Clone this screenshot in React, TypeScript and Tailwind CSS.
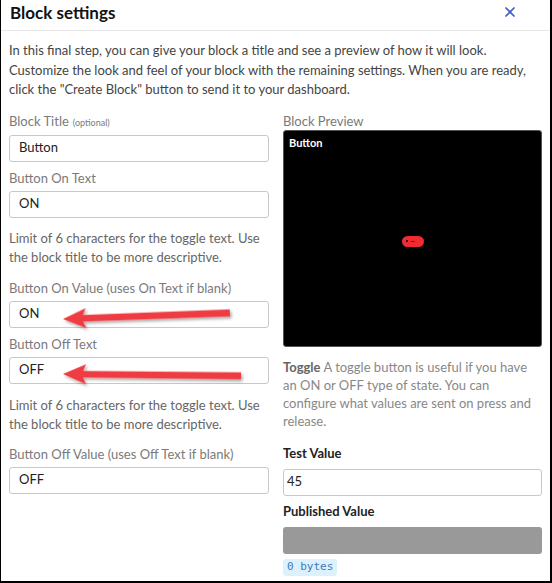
import { X } from 'lucide-react';

const font = { fontFamily: 'Lato, "Open Sans", sans-serif' };

function Field({ label, hint, value }: { label: string; hint?: string; value: string }) {
  return (
    <div>
      <div className="text-[13px] leading-[17px] text-[#7a7a7a]">
        {label}
        {hint && <span className="text-[9px] ml-1">{hint}</span>}
      </div>
      <div className="mt-[4px] h-[27px] rounded-[3px] border border-[#c8c8c8] px-[9px] flex items-center text-[13px] text-[#222]">
        {value}
      </div>
    </div>
  );
}

function Help() {
  return (
    <p className="text-[13px] leading-[19px] text-[#666]">
      Limit of 6 characters for the toggle text. Use the block title to be more descriptive.
    </p>
  );
}

function Arrow({ x, y, len, angle }: { x: number; y: number; len: number; angle: number }) {
  return (
    <g transform={`translate(${x} ${y}) rotate(${angle})`} filter="url(#shadow)">
      <polygon
        points={`0,0 23,-10 20,-3.2 ${len},-3.6 ${len},3.6 20,3.2 23,10`}
        fill="#ef3b43"
      />
    </g>
  );
}

export default function App() {
  return (
    <div
      className="relative w-[552px] h-[583px] bg-white border-l border-r-2 border-b-2 border-black overflow-hidden"
      style={font}
    >
      {/* Header */}
      <div className="h-[31px] flex items-center justify-between pl-[9px] pr-[32px] border-b border-[#e8e8e8]">
        <h1 className="text-[17px] font-bold text-[#111] leading-none -mt-[6px]">Block settings</h1>
        <X size={16} strokeWidth={2.6} className="text-[#3a5fc8] -mt-[6px]" />
      </div>

      <div className="pl-[8px] pr-[8px] pt-[10px]">
        <p className="text-[13px] leading-[19.5px] text-[#444]">
          In this final step, you can give your block a title and see a preview of how it will look.
          Customize the look and feel of your block with the remaining settings. When you are ready,
          click the "Create Block" button to send it to your dashboard.
        </p>

        <div className="mt-[13px] grid grid-cols-[260px_259px] gap-x-[14px]">
          {/* Left column */}
          <div className="flex flex-col">
            <Field label="Block Title" hint="(optional)" value="Button" />
            <div className="mt-[8px]">
              <Field label="Button On Text" value="ON" />
            </div>
            <div className="mt-[11px]">
              <Help />
            </div>
            <div className="mt-[13px]">
              <Field label="Button On Value (uses On Text if blank)" value="ON" />
            </div>
            <div className="mt-[8px]">
              <Field label="Button Off Text" value="OFF" />
            </div>
            <div className="mt-[12px]">
              <Help />
            </div>
            <div className="mt-[12px]">
              <Field label="Button Off Value (uses Off Text if blank)" value="OFF" />
            </div>
          </div>

          {/* Right column */}
          <div className="flex flex-col">
            <div className="text-[13px] leading-[17px] text-[#7a7a7a]">Block Preview</div>
            <div className="h-[217px] rounded-[3px] bg-black border border-[#555] flex flex-col p-[5px]">
              <div className="text-[11px] font-bold text-white leading-[14px]">Button</div>
              <div className="flex-1 flex items-center justify-center -mt-[8px]">
                <div className="w-[22px] h-[11px] rounded-full bg-[#ee2a33] flex items-center pl-[4px] gap-[3px]">
                  <span className="w-[2px] h-[2px] rounded-full bg-black" />
                  <span className="w-[4px] h-[1px] bg-[#7a1a1e]" />
                </div>
              </div>
            </div>

            <p className="mt-[11px] text-[13px] leading-[18.3px] text-[#888]">
              <b className="text-[#666]">Toggle</b> A toggle button is useful if you have an ON or OFF
              type of state. You can configure what values are sent on press and release.
            </p>

            <div className="mt-[14px] text-[13px] leading-[17px] font-bold text-[#222]">Test Value</div>
            <div className="mt-[7px] h-[27px] rounded-[3px] border border-[#c8c8c8] px-[3px] flex items-center text-[13px] text-[#222]">
              45
            </div>
            <div className="mt-[7px] text-[13px] leading-[17px] font-bold text-[#222]">Published Value</div>
            <div className="mt-[7px] h-[27px] rounded-[3px] bg-[#999]" />
            <div className="mt-[5px] self-start px-[4px] h-[17px] flex items-center rounded-[3px] bg-[#dcf1fb] text-[#3d7ac0] text-[11px] font-['DejaVu_Sans_Mono',monospace]">
              0 bytes
            </div>
          </div>
        </div>
      </div>

      {/* Annotation arrows */}
      <svg className="absolute inset-0 pointer-events-none" width="552" height="583">
        <defs>
          <filter id="shadow" x="-10%" y="-50%" width="120%" height="200%">
            <feDropShadow dx="1.5" dy="2" stdDeviation="1.5" floodColor="#000" floodOpacity="0.35" />
          </filter>
        </defs>
        <Arrow x={62} y={319} len={167} angle={-2.1} />
        <Arrow x={62} y={374} len={178} angle={0.6} />
      </svg>
    </div>
  );
}
